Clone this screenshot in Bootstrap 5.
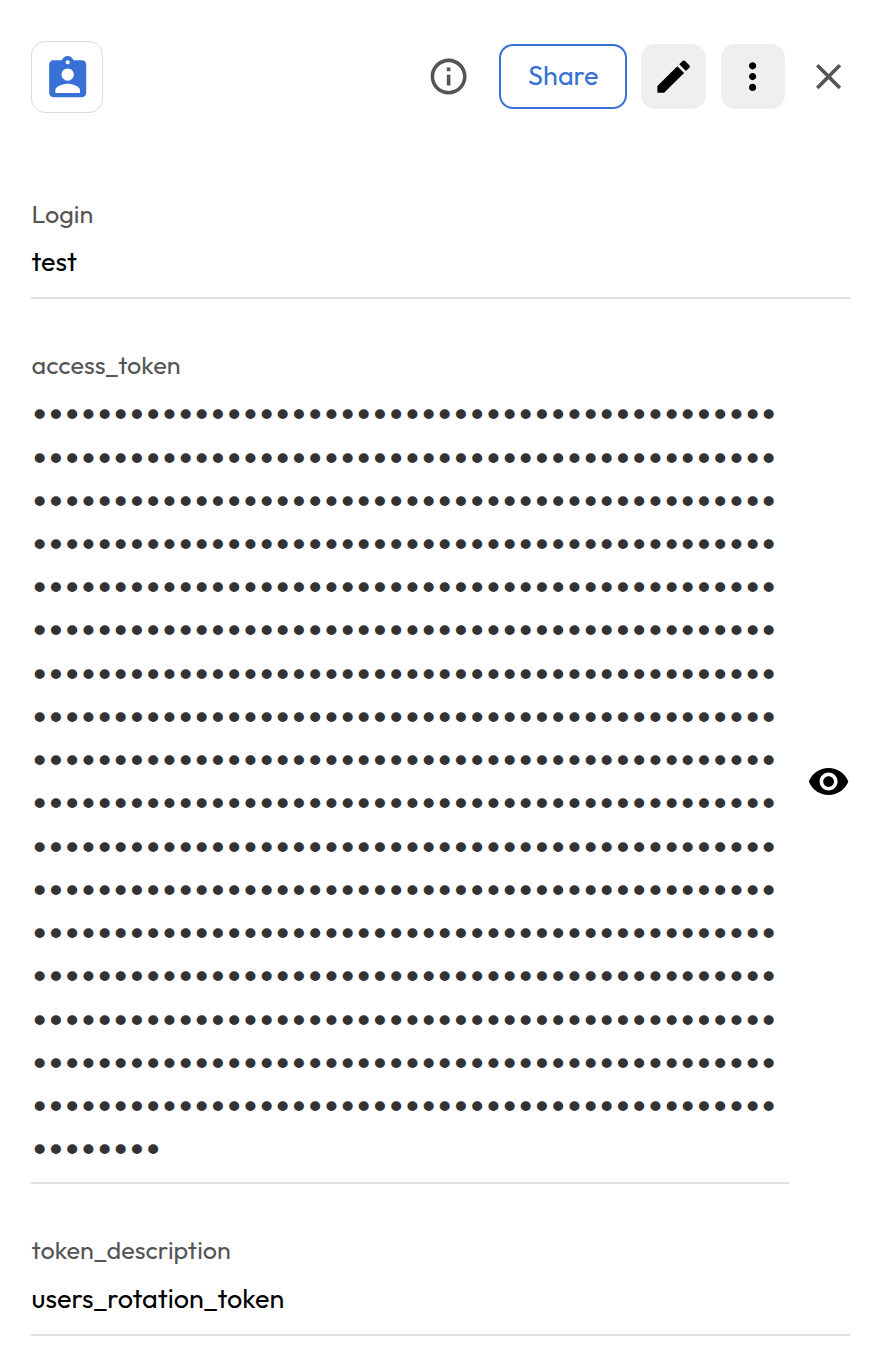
<!DOCTYPE html>
<html lang="en">
<head>
<meta charset="utf-8">
<meta name="viewport" content="width=device-width, initial-scale=1">
<title>Login record</title>
<link href="https://cdn.jsdelivr.net/npm/bootstrap@5.3.0/dist/css/bootstrap.min.css" rel="stylesheet">
<style>
  body { background: #fff; color: #000; font-family: Outfit, Lato, sans-serif; }
  .panel { padding: 41px 38px 0 31px; }
  .toolbar { height: 72px; }
  .record-logo { width: 72px; height: 72px; border: 1px solid #dcdcdc; border-radius: 14px; }
  .record-logo svg { width: 49.4px; height: 49.4px; margin: 4px 0 0 1.5px; fill: #3871d6; }
  .icon { width: 43.2px; height: 43.2px; display: block; flex: none; }
  .muted-icon { fill: #555; }
  .action { height: 65px; border-radius: 14px; padding: 0; margin-bottom: 1px; }
  .btn-share { width: 128px; margin-left: 29px; border: 2px solid #3871d6; color: #3871d6; font-size: 27px; line-height: 1; padding: 0 0 3px 1px; }
  .btn-square { width: 65px; background: #efefef; border: 0; }
  .btn-square .icon { margin-top: 1px; }
  .field-label { color: #555; font-size: 25.2px; line-height: 30px; padding-left: .6px; height: 32px; }
  .field-value { font-size: 27px; line-height: 43.2px; padding-left: .6px; }
  .field-line { border-bottom: 2px solid #dedede; }
  .secret { color: #333; font-family: "DejaVu Sans", sans-serif; font-size: 34.5px; line-height: 43.235px; letter-spacing: -4.15px; word-break: break-all; margin: 12.3px 0 0 -1.4px; }
</style>
</head>
<body>
<main class="panel">
  <header class="toolbar d-flex align-items-center">
    <div class="record-logo d-flex align-items-center justify-content-center">
      <svg viewBox="0 0 24 24"><path d="M19 3h-4.18C14.4 1.84 13.3 1 12 1s-2.4.84-2.82 2H5c-1.1 0-2 .9-2 2v14c0 1.1.9 2 2 2h14c1.1 0 2-.9 2-2V5c0-1.1-.9-2-2-2zm-7 0c.55 0 1 .45 1 1s-.45 1-1 1-1-.45-1-1 .45-1 1-1zm0 4c1.66 0 3 1.34 3 3s-1.34 3-3 3-3-1.34-3-3 1.34-3 3-3zm6 12H6v-1.4c0-2 4-3.1 6-3.1s6 1.1 6 3.1V19z"/></svg>
    </div>
    <svg class="icon muted-icon ms-auto" viewBox="0 0 24 24"><path d="M11 7h2v2h-2zm0 4h2v6h-2zm1-9C6.48 2 2 6.48 2 12s4.480 10 10 10 10-4.480 10-10S17.520 2 12 2zm0 18c-4.410 0-8-3.590-8-8s3.590-8 8-8 8 3.590 8 8-3.590 8-8 8z"/></svg>
    <button type="button" class="btn action btn-share">Share</button>
    <button type="button" class="btn action btn-square d-flex align-items-center justify-content-center" style="margin-left:14px" aria-label="Edit">
      <svg class="icon" viewBox="0 0 24 24"><path d="M3 17.250V21h3.750L17.810 9.940l-3.750-3.750L3 17.250zM20.710 7.040c.39-.39.39-1.020 0-1.410l-2.340-2.340c-.39-.39-1.020-.39-1.410 0l-1.830 1.830 3.750 3.750 1.830-1.830z"/></svg>
    </button>
    <button type="button" class="btn action btn-square d-flex align-items-center justify-content-center" style="margin-left:15px;width:64px" aria-label="More">
      <svg class="icon" viewBox="0 0 24 24"><path d="M12 8c1.100 0 2-.9 2-2s-.9-2-2-2-2 .9-2 2 .9 2 2 2zm0 2c-1.100 0-2 .9-2 2s.9 2 2 2 2-.9 2-2-.9-2-2-2zm0 6c-1.100 0-2 .9-2 2s.9 2 2 2 2-.9 2-2-.9-2-2-2z"/></svg>
    </button>
    <svg class="icon muted-icon" style="margin-left:22px" viewBox="0 0 24 24"><path d="M19 6.410 17.590 5 12 10.590 6.410 5 5 6.410 10.590 12 5 17.590 6.410 19 12 13.410 17.590 19 19 17.590 13.410 12z"/></svg>
  </header>

  <section class="field-line" style="margin-top:86px;height:100px">
    <div class="field-label">Login</div>
    <div class="field-value" style="margin-top:9px">test</div>
  </section>

  <section class="d-flex" style="margin-top:51px;height:834px">
    <div class="field-line" style="width:758px">
      <div class="field-label">access_token</div>
      <div class="secret" id="secret"></div>
    </div>
    <svg class="icon ms-auto" style="margin-top:410px;margin-right:-.5px" viewBox="0 0 24 24"><path d="M12 4.500C7 4.500 2.730 7.610 1 12c1.730 4.390 6 7.500 11 7.500s9.270-3.110 11-7.500c-1.730-4.390-6-7.500-11-7.500zM12 17c-2.760 0-5-2.240-5-5s2.240-5 5-5 5 2.240 5 5-2.240 5-5 5zm0-8c-1.660 0-3 1.340-3 3s1.340 3 3 3 3-1.340 3-3-1.340-3-3-3z"/></svg>
  </section>

  <section class="field-line" style="margin-top:51px;height:101px">
    <div class="field-label">token_description</div>
    <div class="field-value" style="margin-top:10px">users_rotation_token</div>
  </section>
</main>
<script src="https://cdn.jsdelivr.net/npm/bootstrap@5.3.0/dist/js/bootstrap.bundle.min.js"></script>
<script>
  // 790 masked characters
  document.getElementById('secret').textContent = '•'.repeat(790);
</script>
</body>
</html>
